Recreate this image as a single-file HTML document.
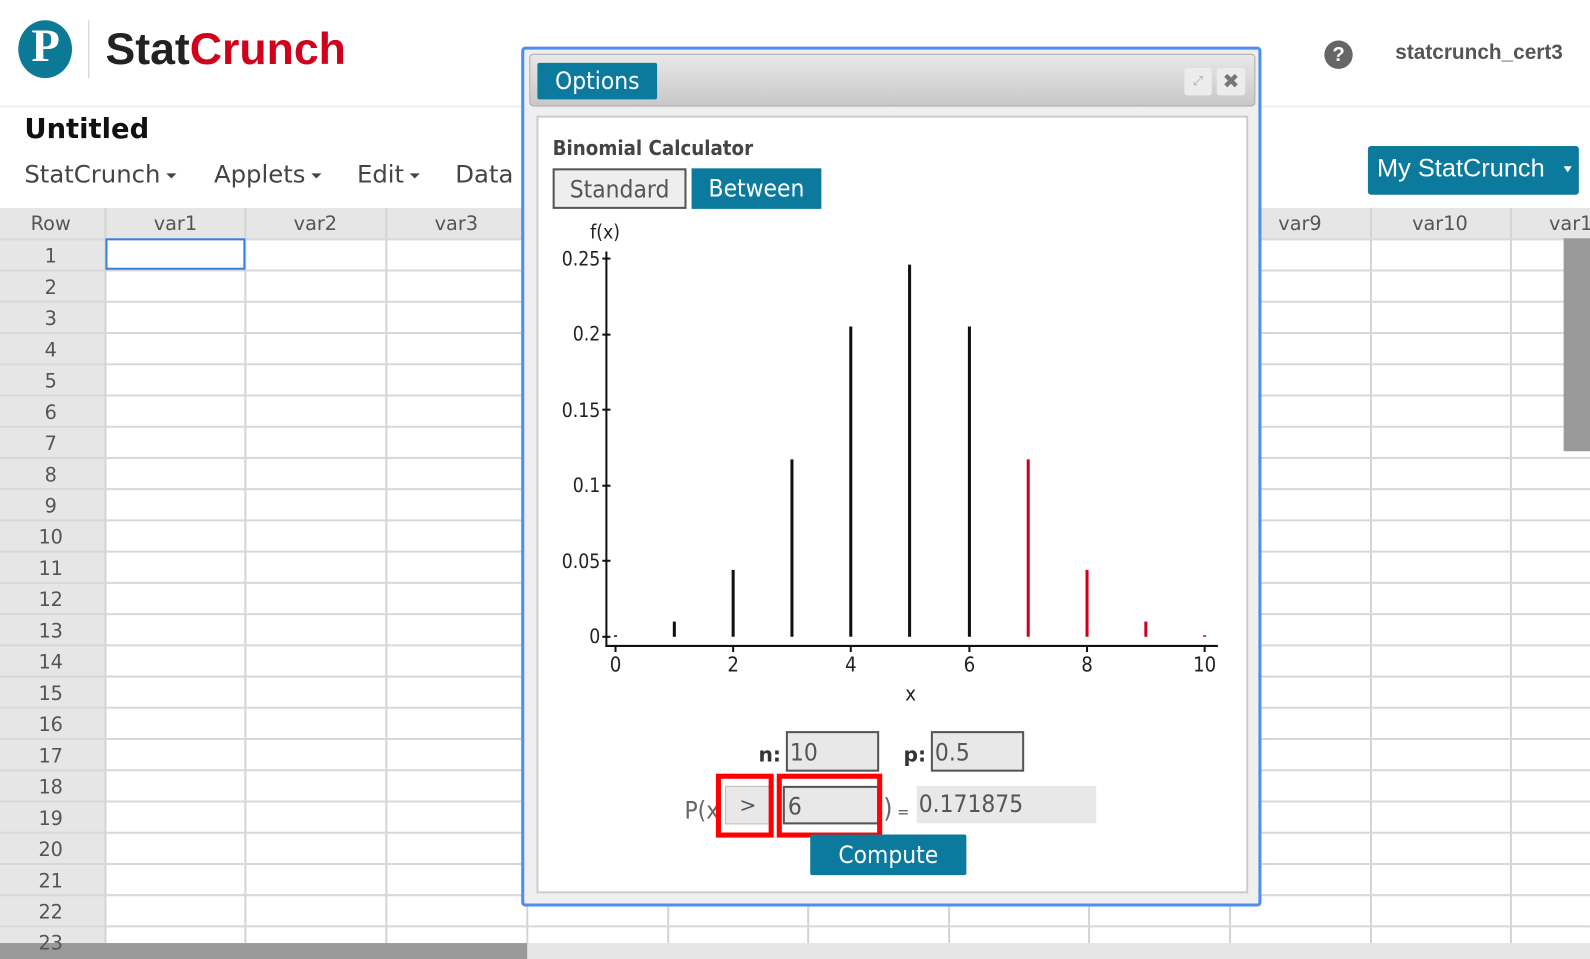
<!DOCTYPE html>
<html><head><meta charset="utf-8"><style>
*{box-sizing:border-box;margin:0;padding:0}
body{width:1590px;height:959px;overflow:hidden;background:#fff;font-family:"Liberation Sans",sans-serif;position:relative}
#w{position:absolute;left:0;top:0;width:1568px;height:946px;transform:scale(1.01403);transform-origin:0 0}
.abs{position:absolute}
.grid{position:absolute;left:0;top:205px;width:1568px;height:741px;overflow:hidden}
.m{position:absolute;top:158px;font:24px 'DejaVu Sans',sans-serif;color:#444;white-space:nowrap}
.tri{display:inline-block;width:0;height:0;border-left:5px solid transparent;border-right:5px solid transparent;border-top:5px solid #444;vertical-align:middle;margin-left:6px}
</style></head><body><div id="w">
<div class="abs" style="left:18px;top:20px;width:53px;height:57px;border-radius:50%;background:#0c7a97"></div>
<div class="abs" style="left:24px;top:18px;width:42px;height:60px;color:#fff;font:bold 46px 'Liberation Serif',serif;text-align:center">P</div>
<div class="abs" style="left:87px;top:20px;width:1px;height:57px;background:#ccc"></div>
<div class="abs" style="left:104px;top:24px;font:bold 44px 'Liberation Sans',sans-serif;color:#222">Stat<span style="color:#d0021b">Crunch</span></div>
<div class="abs" style="left:0;top:104px;width:1568px;height:2px;background:#eee"></div>
<div class="abs" style="left:1306px;top:40px;width:28px;height:28px;border-radius:50%;background:#666;color:#fff;font:bold 20px 'Liberation Sans';text-align:center;line-height:28px">?</div>
<div class="abs" style="left:1376px;top:40px;font:bold 20.5px 'Liberation Sans';color:#555">statcrunch_cert3</div>
<div class="abs" style="left:24px;top:112px;font:bold 27px 'DejaVu Sans',sans-serif;color:#111">Untitled</div>
<div class="m" style="left:24px">StatCrunch<span class="tri"></span></div>
<div class="m" style="left:211px">Applets<span class="tri"></span></div>
<div class="m" style="left:352px">Edit<span class="tri"></span></div>
<div class="m" style="left:449px">Data</div>
<div class="abs" style="left:1349px;top:144px;width:208px;height:48px;background:#0c7a9c;border-radius:3px;color:#fff;font:25px 'Liberation Sans';line-height:44px;padding-left:9px">My StatCrunch <span style="display:inline-block;width:0;height:0;border-left:4px solid transparent;border-right:4px solid transparent;border-top:6px solid #fff;vertical-align:middle;margin-left:12px"></span></div>
<div class="grid">
<svg width="1568" height="741" style="position:absolute;left:0;top:0">
<rect x="0" y="0" width="1568" height="31" fill="#e6e6e6"/>
<rect x="0" y="0" width="104" height="741" fill="#e6e6e6"/>
<g stroke="#d4d4d4" stroke-width="2">
<line x1="104" y1="0" x2="104" y2="741"/><line x1="242" y1="0" x2="242" y2="741"/><line x1="381" y1="0" x2="381" y2="741"/><line x1="520" y1="0" x2="520" y2="741"/><line x1="659" y1="0" x2="659" y2="741"/><line x1="797" y1="0" x2="797" y2="741"/><line x1="936" y1="0" x2="936" y2="741"/><line x1="1074" y1="0" x2="1074" y2="741"/><line x1="1213" y1="0" x2="1213" y2="741"/><line x1="1352" y1="0" x2="1352" y2="741"/><line x1="1490" y1="0" x2="1490" y2="741"/>
</g>
<g stroke="#d8d8d8" stroke-width="2" id="h"></g>
<rect x="1542" y="30" width="26" height="210" fill="#999"/>
<rect x="0" y="725" width="520" height="16" fill="#999"/>
<rect x="520" y="725" width="1048" height="16" fill="#e6e6e6"/>
<rect x="105" y="31" width="136" height="29" fill="none" stroke="#3a7fe0" stroke-width="2"/>
<g font-family="DejaVu Sans" font-size="19" fill="#555" text-anchor="middle" id="t">
<text x="50" y="22">Row</text><text x="173" y="22">var1</text><text x="311" y="22">var2</text><text x="450" y="22">var3</text><text x="1282" y="22">var9</text><text x="1420" y="22">var10</text><text x="1555" y="22">var11</text>
</g>
</svg>
</div>
<div class="abs" style="left:514px;top:46px;width:730px;height:848px;border:3px solid #4d8ef0;border-radius:4px;background:#efefef"></div>
<div class="abs" style="left:522px;top:53px;width:716px;height:52px;border:1px solid #aaa;border-radius:4px;background:linear-gradient(#e8e8e8,#c8c8c8)"></div>
<div class="abs" style="left:530px;top:62px;width:118px;height:36px;background:#0c7a9c;border-radius:2px;color:#fff;font:24px 'DejaVu Sans Condensed','DejaVu Sans',sans-serif;line-height:36px;text-align:center">Options</div>
<div class="abs" style="left:1168px;top:67px;width:27px;height:27px;background:#ececec;border-radius:3px;color:#aaa;font:13px 'DejaVu Sans';text-align:center;line-height:27px">⤢</div>
<div class="abs" style="left:1200px;top:67px;width:28px;height:27px;background:#ececec;border-radius:3px;color:#777;font:bold 20px 'DejaVu Sans';text-align:center;line-height:27px">✖</div>
<div class="abs" style="left:529px;top:114px;width:702px;height:767px;border:2px solid #ccc;background:#fff"></div>
<div class="abs" style="left:545px;top:134px;font:bold 20px 'DejaVu Sans Condensed','DejaVu Sans',sans-serif;color:#444">Binomial Calculator</div>
<div class="abs" style="left:545px;top:166px;width:132px;height:40px;border:2px solid #555;background:#eee;color:#555;font:24px 'DejaVu Sans Condensed','DejaVu Sans',sans-serif;text-align:center;line-height:38px">Standard</div>
<div class="abs" style="left:682px;top:166px;width:128px;height:40px;background:#0c7a9c;color:#fff;font:24px 'DejaVu Sans Condensed','DejaVu Sans',sans-serif;text-align:center;line-height:40px">Between</div>
<svg class="abs" style="left:0;top:0" width="1568" height="946">
<g font-family="DejaVu Sans Condensed,DejaVu Sans" font-size="19" fill="#222">
<text x="582" y="235">f(x)</text>
<g text-anchor="end"><text x="592" y="262">0.25</text><text x="592" y="336">0.2</text><text x="592" y="411">0.15</text><text x="592" y="485">0.1</text><text x="592" y="560">0.05</text><text x="592" y="634">0</text></g>
<g text-anchor="middle" font-size="20"><text x="607" y="662">0</text><text x="723" y="662">2</text><text x="839" y="662">4</text><text x="956" y="662">6</text><text x="1072" y="662">8</text><text x="1188" y="662">10</text><text x="898" y="691">x</text></g>
</g>
<g stroke="#111" stroke-width="2">
<line x1="598" y1="248" x2="598" y2="638"/><line x1="597" y1="637" x2="1201" y2="637"/>
<line x1="594" y1="255" x2="602" y2="255"/><line x1="594" y1="330" x2="602" y2="330"/><line x1="594" y1="404" x2="602" y2="404"/><line x1="594" y1="479" x2="602" y2="479"/><line x1="594" y1="553" x2="602" y2="553"/><line x1="594" y1="628" x2="602" y2="628"/>
<line x1="607" y1="637" x2="607" y2="643"/><line x1="723" y1="637" x2="723" y2="643"/><line x1="839" y1="637" x2="839" y2="643"/><line x1="956" y1="637" x2="956" y2="643"/><line x1="1072" y1="637" x2="1072" y2="643"/><line x1="1188" y1="637" x2="1188" y2="643"/>
</g>
<g stroke-width="3">
<line x1="607" y1="628" x2="607" y2="626.5" stroke="#111"/>
<line x1="665" y1="628" x2="665" y2="613" stroke="#111"/>
<line x1="723" y1="628" x2="723" y2="562" stroke="#111"/>
<line x1="781" y1="628" x2="781" y2="453" stroke="#111"/>
<line x1="839" y1="628" x2="839" y2="322" stroke="#111"/>
<line x1="897" y1="628" x2="897" y2="261" stroke="#111"/>
<line x1="956" y1="628" x2="956" y2="322" stroke="#111"/>
<line x1="1014" y1="628" x2="1014" y2="453" stroke="#d0021b"/>
<line x1="1072" y1="628" x2="1072" y2="562" stroke="#d0021b"/>
<line x1="1130" y1="628" x2="1130" y2="613" stroke="#d0021b"/>
<line x1="1188" y1="628" x2="1188" y2="626.5" stroke="#d0021b"/>
</g>
</svg>
<div class="abs" style="left:748px;top:732px;font:bold 20px 'DejaVu Sans';color:#333">n:</div>
<div class="abs" style="left:775px;top:721px;width:92px;height:40px;border:2px solid #555;background:#e8e8e8;font:24px 'DejaVu Sans Condensed','DejaVu Sans';color:#555;line-height:38px;padding-left:2px">10</div>
<div class="abs" style="left:891px;top:732px;font:bold 20px 'DejaVu Sans';color:#333">p:</div>
<div class="abs" style="left:918px;top:721px;width:92px;height:40px;border:2px solid #555;background:#e8e8e8;font:24px 'DejaVu Sans Condensed','DejaVu Sans';color:#555;line-height:38px;padding-left:2px">0.5</div>
<div class="abs" style="left:675px;top:785px;font:24px 'DejaVu Sans Condensed','DejaVu Sans';color:#666">P(x</div>
<div class="abs" style="left:715px;top:775px;width:45px;height:38px;border:1px solid #bbb;background:#e8e8e8;color:#555;font:20px 'DejaVu Sans';text-align:center;line-height:36px">&gt;</div>
<div class="abs" style="left:706px;top:763px;width:57px;height:63px;border:5px solid #f00"></div>
<div class="abs" style="left:772px;top:775px;width:95px;height:38px;border:2px solid #555;background:#e8e8e8;font:24px 'DejaVu Sans Condensed','DejaVu Sans';color:#555;line-height:36px;padding-left:3px">6</div>
<div class="abs" style="left:766px;top:763px;width:104px;height:63px;border:5px solid #f00"></div>
<div class="abs" style="left:871px;top:783px;font:26px 'DejaVu Sans Condensed','DejaVu Sans';color:#666">)<span style="font-size:16px"> =</span></div>
<div class="abs" style="left:904px;top:775px;width:177px;height:37px;background:#e8e8e8;font:24px 'DejaVu Sans Condensed','DejaVu Sans';color:#555;line-height:37px;padding-left:2px">0.171875</div>
<div class="abs" style="left:799px;top:823px;width:154px;height:40px;background:#0c7a9c;border-radius:2px;color:#fff;font:24px 'DejaVu Sans Condensed','DejaVu Sans';text-align:center;line-height:40px">Compute</div>
</div>
<script>
var g=document.getElementById('h'),t=document.getElementById('t'),s='';var tt='';
for(var i=0;i<24;i++){var y=31+i*30.8;s+='<line x1="0" y1="'+y+'" x2="1568" y2="'+y+'"/>';if(i<23)tt+='<text x="50" y="'+(y+23)+'">'+(i+1)+'</text>';}
g.innerHTML=s;t.innerHTML+=tt;
</script>
</body></html>
